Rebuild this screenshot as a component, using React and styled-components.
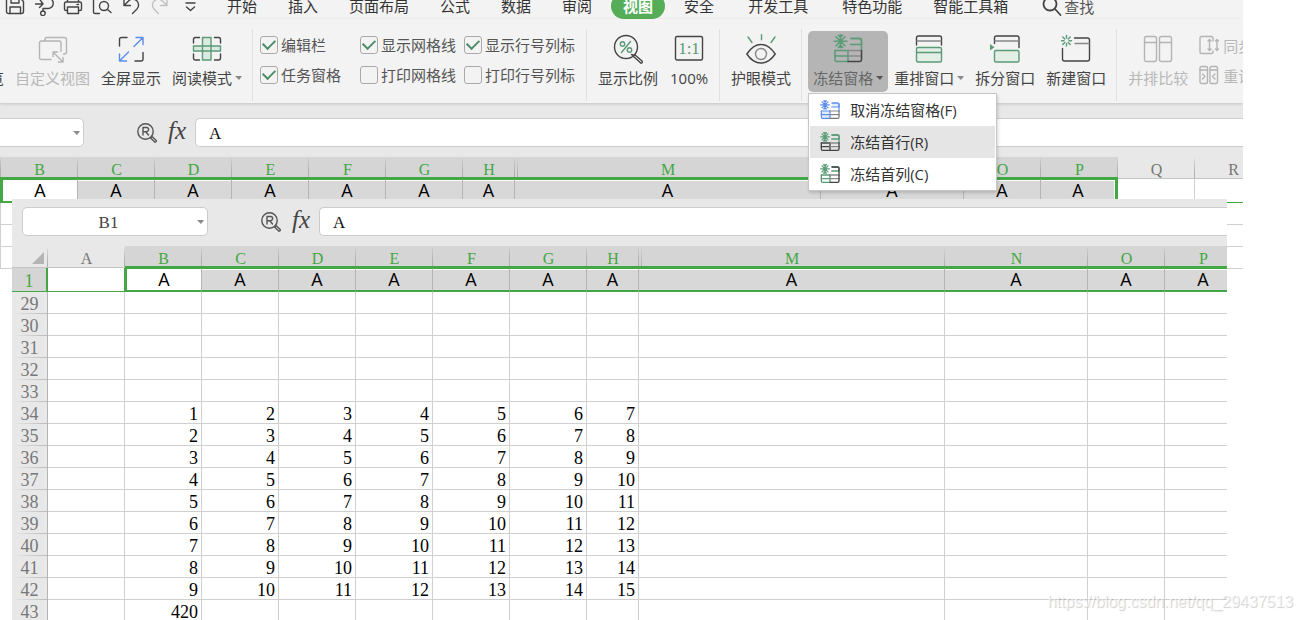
import React from "react";
import styled, { createGlobalStyle, css } from "styled-components";

const green = "#43a743";
const iconGreen = "#5b9b77";
const iconBlue = "#5b8def";
const iconGray = "#b4b4b4";
const iconDark = "#444";

const tabGroups = [
  ["开始", "插入", "页面布局", "公式", "数据", "审阅", "视图", "安全"],
  ["开发工具"],
  ["特色功能", "智能工具箱"],
];

const checks = [
  { id: "formula-bar", label: "编辑栏", on: true },
  { id: "show-grid", label: "显示网格线", on: true },
  { id: "show-heads", label: "显示行号列标", on: true },
  { id: "task-pane", label: "任务窗格", on: true },
  { id: "print-grid", label: "打印网格线", on: false },
  { id: "print-heads", label: "打印行号列标", on: false },
];

const columns = [
  { name: "B", width: 77 },
  { name: "C", width: 77 },
  { name: "D", width: 77 },
  { name: "E", width: 77 },
  { name: "F", width: 77 },
  { name: "G", width: 77 },
  { name: "H", width: 52 },
  { name: "M", width: 306, afterHidden: true },
  { name: "N", width: 143 },
  { name: "O", width: 77 },
  { name: "P", width: 77 },
];

const extraColumns = [
  { name: "Q", width: 77 },
  { name: "R", width: 77 },
];

const rows = [29, 30, 31, 32, 33, 34, 35, 36, 37, 38, 39, 40, 41, 42, 43];

const cellValue = (row, index) => {
  if (row === 43) return index === 0 ? 420 : "";
  if (row < 34 || index > 6) return "";
  return row - 33 + index;
};

/* icons */

const Icon = ({ size = 30, box = 30, color = iconDark, children }) => (
  <svg
    width={size}
    height={size}
    viewBox={`0 0 ${box} ${box}`}
    fill="none"
    stroke={color}
    strokeWidth="1.4"
    strokeLinecap="round"
    strokeLinejoin="round"
    aria-hidden="true"
  >
    {children}
  </svg>
);

const SaveIcon = () => (
  <Icon size={20} box={20}>
    <path d="M1.5 3.5a2 2 0 0 1 2-2h11l4 4v10a2 2 0 0 1-2 2h-13a2 2 0 0 1-2-2z" />
    <path d="M5 17.5v-6.500h10.500v6.500M6 1.500v5.500h8v-5.500" />
  </Icon>
);

const ExportIcon = () => (
  <Icon size={20} box={20}>
    <path d="M1.500 8h6M5.500 3l3.500 5-3.500 3.500M8.500 2h5.500a4.800 4.800 0 0 1 0 10.500h-5v2.500a2.300 2.300 0 1 0 2.200 2.200q0-2.200-2.200-2.200h-.5" />
  </Icon>
);

const PrintIcon = () => (
  <Icon size={20} box={20}>
    <path d="M4.500 6v-4.500h11v4.500M4.500 14.500h-1.500q-1.500 0-1.500-1.500v-5.500q0-1.500 1.500-1.500h14q1.500 0 1.500 1.500v5.500q0 1.500-1.500 1.500h-1.500M4.500 11h11v6.500h-11zM14 8.500h1.500" />
  </Icon>
);

const PreviewIcon = () => (
  <Icon size={20} box={20}>
    <path d="M7.500 17.500h-4.500q-1.500 0-1.500-1.500v-14.500h15v2" />
    <circle cx="12" cy="10" r="4.500" />
    <path d="M15.500 13.500l3.500 3" />
  </Icon>
);

const UndoIcon = ({ color, flip }) => (
  <Icon size={20} box={20} color={color}>
    <g transform={flip ? "translate(20 0) scale(-1 1)" : undefined}>
      <path d="M3 3v6.500h6.500M3.500 9l4-4a5.800 5.800 0 0 1 8.500 8l-4.500 4.500" />
    </g>
  </Icon>
);

const MoreIcon = () => (
  <Icon size={20} box={20}>
    <path d="M7 7h9M7.500 11l4 3.500 4-3.500" />
  </Icon>
);

const SearchIcon = () => (
  <Icon size={20} box={20}>
    <g strokeWidth="1.800">
      <circle cx="8" cy="8" r="6.500" />
      <path d="M13 13l5.500 6" />
    </g>
  </Icon>
);

const CustomViewIcon = () => (
  <Icon color={iconGray}>
    <path d="M7 7v-1.500q0-2 2-2h17.500q2 0 2 2v12.500q0 2-2 2h-1" />
    <path d="M13 25.500h-9.500q-2 0-2-2v-14.500q0-2 2-2h17.500q2 0 2 2v8.500" />
    <path d="M15 18l10 10M15 22.500v-4.500h4.500M20.500 28h4.500v-4.500" />
  </Icon>
);

const FullScreenIcon = () => (
  <Icon>
    <path d="M3.500 12v-6.500q0-2 2-2h5.500M19 27h6q2 0 2-2v-6.500" />
    <path stroke={iconBlue} d="M18 12.500l9-9M20 3.500h7v7M12.500 18l-9 9M3.500 20v7h7" />
  </Icon>
);

const ReadingIcon = () => (
  <Icon>
    <path d="M1.500 9v-3.500q0-2 2-2h4M22.500 3.500h4q2 0 2 2v3.500M28.500 20v4q0 2-2 2h-4M7.500 26h-4q-2 0-2-2v-4" />
    <g stroke={iconGreen} fill="#dcebe1">
      <path d="M10.500 3.500h8.500v22.500h-8.500z" />
      <path d="M1.500 12h27v5h-27z" />
      <path fill="none" d="M10.500 12v5M19 12v5" />
    </g>
  </Icon>
);

const RatioIcon = () => (
  <Icon>
    <circle cx="13" cy="13" r="11.500" />
    <path d="M20 22l1.500-1.500 7.500 6.500q1 2-1 2.200zM18.500 20.500l2 1" />
    <g stroke={iconGreen}>
      <circle cx="9.500" cy="10" r="2.200" />
      <circle cx="16.500" cy="16" r="2.200" />
      <path d="M17.500 7.500l-9 11" />
    </g>
  </Icon>
);

const ActualSizeIcon = () => (
  <Icon>
    <rect x="1.500" y="2.500" width="27" height="23.500" rx="1.500" />
    <text
      x="15"
      y="20"
      textAnchor="middle"
      fontFamily="Liberation Serif, serif"
      fontSize="17"
      fill={iconGreen}
      stroke="none"
    >
      1:1
    </text>
  </Icon>
);

const EyeIcon = () => (
  <Icon>
    <path d="M.8 20c4-6 9-9.500 14.200-9.500s10.200 3.500 14.200 9.500c-4 6-9 9-14.200 9s-10.200-3-14.200-9z" />
    <circle cx="15" cy="20" r="5.500" stroke="#888" />
    <path stroke={iconGreen} d="M2 3l4 5.500M15.500.8v5M29 3l-4 5.500" />
  </Icon>
);

const FreezeIcon = ({ size, accent = iconGreen, top, left, corner = iconDark, fill = "none", weight = 1.5 }) => (
  <Icon size={size}>
    <g strokeWidth={weight}>
      <path
        stroke={accent}
        d="M7.500.8v13M1 7.300h13M3 2.800l9 9M12 2.800l-9 9M5.500 1.200l2 2 2-2M5.500 13.400l2-2 2 2"
      />
      <path stroke={accent} fill={fill} d="M18 4.500h8.500q2 0 2 2v4h-11" />
      <path stroke={left || accent} fill={fill} d="M2 16.500v9q0 2 2 2h11v-11" />
      <path stroke={left || accent} d="M2 22h13M2 16.500h13" />
      <path stroke={top || accent} d="M18 4.500h8.500q2 0 2 2v10" />
      <path stroke="#8a8a8a" d="M15 22h13.500M15 16.500h13.500" />
      <path stroke={corner} d="M15 27.500h11.500q2 0 2-2v-9" />
    </g>
  </Icon>
);

const ArrangeIcon = () => (
  <Icon>
    <path d="M2.500 11v-7q0-2 2-2h21q2 0 2 2v7" />
    <path stroke="#888" d="M3 7h24" />
    <path stroke={iconGreen} fill="#e3eee7" d="M4 13.500h22q1.500 0 1.500 1.500v11.500q0 1.500-1.500 1.500h-22q-1.500 0-1.500-1.500v-11.500q0-1.500 1.500-1.500zM2.500 18.500h25" />
  </Icon>
);

const SplitIcon = () => (
  <Icon>
    <path d="M4.500 9.500v-5.500q0-2 2-2h20.500q2 0 2 2v9.500" />
    <path stroke="#888" d="M5 7h23.500" />
    <path fill={iconGreen} stroke="none" d="M0 10l4.500 3.200-4.500 3.200z" />
    <rect x="4.500" y="16.500" width="24.500" height="11.500" rx="1.500" stroke={iconGreen} fill="#e3eee7" />
  </Icon>
);

const NewWindowIcon = () => (
  <Icon>
    <path d="M1.500 14.500v10.500q0 2 2 2h23q2 0 2-2v-19q0-2-2-2h-13" />
    <path stroke="#888" d="M14 9.500h14" />
    <path stroke={iconGreen} d="M5.500 1.500v2.500M5.500 9.500v2.500M.5 6.800h2.500M8 6.800h2.500M1.800 3l2 2M7.200 8.500l2 2M9.200 3l-2 2M3.800 8.500l-2 2" />
  </Icon>
);

const CompareIcon = () => (
  <Icon color={iconGray}>
    <rect x="1.500" y="2.500" width="12" height="25" rx="2" />
    <rect x="16.500" y="2.500" width="12" height="25" rx="2" />
    <path d="M2 8.500h11M17 8.500h11" />
  </Icon>
);

const SyncIcon = () => (
  <Icon size={20} box={20} color={iconGray}>
    <path d="M14 6v-3q0-1.500-1.500-1.500h-10q-1.500 0-1.500 1.500v14q0 1.500 1.500 1.500h10q1.500 0 1.500-1.500v-1" />
    <path d="M10.500 4.500v11M9 6l1.500-1.500L12 6M9 14l1.500 1.500L12 14M18 4.500v11M16.500 6L18 4.500 19.500 6M16.500 14l1.500 1.500 1.500-1.500" />
  </Icon>
);

const ResetIcon = () => (
  <Icon size={20} box={20} color={iconGray}>
    <rect x="1" y="1.500" width="7.500" height="17" rx="1.500" />
    <rect x="11" y="1.500" width="7.500" height="17" rx="1.500" />
    <path d="M1 5h7.500M11 5h7.500M3.500 9l2.500 2.500L3.500 14M16 9l-2.500 2.500L16 14" />
  </Icon>
);

const LookupIcon = () => (
  <Icon size={20} box={20} color="#555">
    <circle cx="8.500" cy="8.500" r="7.700" />
    <path d="M6 12v-7.500h3.500a2 2 0 0 1 0 4.200h-3.500M9 9l2.500 3" />
    <path d="M13.500 15l1.500-1.500 4.200 4q.5 1.500-1.200 1.700z" />
  </Icon>
);

/* spreadsheet pieces */

const FormulaBar = ({ id, name, shifted, tall }) => (
  <FormulaRow $shifted={shifted} $tall={tall}>
    <NameBox>
      <input aria-label={`${id} name box`} defaultValue={name} />
      <button type="button" aria-label="Names">
        <Caret />
      </button>
    </NameBox>
    <FormulaTools>
      <button type="button" aria-label="Lookup">
        <LookupIcon />
      </button>
      <FxButton type="button">fx</FxButton>
    </FormulaTools>
    <FormulaInput aria-label={`${id} formula`} defaultValue="A" />
  </FormulaRow>
);

const BackSheet = () => (
  <Sheet>
    <colgroup>
      <col width={1} />
      {[...columns, ...extraColumns].map((column) => (
        <col key={column.name} width={column.width} />
      ))}
    </colgroup>
    <thead>
      <tr>
        <ColumnHead $on />
        {columns.map((column) => (
          <ColumnHead key={column.name} $on $double={column.afterHidden}>
            {column.name}
          </ColumnHead>
        ))}
        {extraColumns.map((column) => (
          <ColumnHead key={column.name}>{column.name}</ColumnHead>
        ))}
      </tr>
    </thead>
    <tbody>
      <tr>
        <BeforeCell $on />
        {columns.map((column, index) => (
          <PickedCell key={column.name} $first={index === 0} $last={index === columns.length - 1}>
            A
          </PickedCell>
        ))}
        {extraColumns.map((column) => (
          <BesideCell key={column.name} />
        ))}
      </tr>
      {[2, 3, 4].map((row) => (
        <tr key={row}>
          <BeforeCell />
          {[...columns, ...extraColumns].map((column) => (
            <Cell key={column.name} />
          ))}
        </tr>
      ))}
    </tbody>
  </Sheet>
);

const FrontSheet = () => (
  <Sheet>
    <colgroup>
      <col width={36} />
      <col width={77} />
      {columns.map((column) => (
        <col key={column.name} width={column.width} />
      ))}
    </colgroup>
    <thead>
      <tr>
        <ColumnHead>
          <Corner />
        </ColumnHead>
        <ColumnHead>A</ColumnHead>
        {columns.map((column) => (
          <ColumnHead key={column.name} $on $double={column.afterHidden}>
            {column.name}
          </ColumnHead>
        ))}
      </tr>
    </thead>
    <tbody>
      <tr>
        <RowHead scope="row" $on>
          1
        </RowHead>
        <BesideCell $before />
        {columns.map((column, index) => (
          <PickedCell key={column.name} $first={index === 0}>
            A
          </PickedCell>
        ))}
      </tr>
      {rows.map((row) => (
        <tr key={row}>
          <RowHead scope="row">{row}</RowHead>
          <Cell />
          {columns.map((column, index) => (
            <Cell key={column.name}>{cellValue(row, index)}</Cell>
          ))}
        </tr>
      ))}
    </tbody>
  </Sheet>
);

const App = () => {
  return (
    <Wrapper>
      <GlobalStyle />
      <BackWindow>
        <MenuBar>
          <QuickTools>
            <button type="button" aria-label="Save"><SaveIcon /></button>
            <button type="button" aria-label="Export"><ExportIcon /></button>
            <button type="button" aria-label="Print"><PrintIcon /></button>
            <button type="button" aria-label="Preview"><PreviewIcon /></button>
            <button type="button" aria-label="Undo"><UndoIcon /></button>
            <button type="button" aria-label="Redo" disabled><UndoIcon flip color="#c0c0c0" /></button>
            <button type="button" aria-label="More"><MoreIcon /></button>
          </QuickTools>
          <Tabs>
            {tabGroups.map((group) => (
              <TabGroup key={group[0]}>
                {group.map((tab) => (
                  <Tab key={tab} type="button" $active={tab === "视图"}>
                    {tab}
                  </Tab>
                ))}
              </TabGroup>
            ))}
          </Tabs>
          <SearchButton type="button">
            <SearchIcon />
            查找
          </SearchButton>
        </MenuBar>

        <Ribbon>
          <Group $cut>
            <Tool type="button" $narrow><Blank /><span>览</span></Tool>
            <Tool type="button" disabled><CustomViewIcon /><span>自定义视图</span></Tool>
            <Tool type="button"><FullScreenIcon /><span>全屏显示</span></Tool>
            <Tool type="button"><ReadingIcon /><span>阅读模式<Caret /></span></Tool>
          </Group>
          <Divider />
          <CheckGrid>
            {checks.map(({ id, label, on }) => (
              <Check key={id} htmlFor={id}>
                <input id={id} type="checkbox" defaultChecked={on} />
                {label}
              </Check>
            ))}
          </CheckGrid>
          <Divider />
          <Group>
            <Tool type="button"><RatioIcon /><span>显示比例</span></Tool>
            <Tool type="button"><ActualSizeIcon /><span>100%</span></Tool>
          </Group>
          <Divider />
          <Group>
            <Tool type="button"><EyeIcon /><span>护眼模式</span></Tool>
          </Group>
          <Divider />
          <Group>
            <MenuAnchor>
              <Tool type="button" $open aria-expanded="true">
                <FreezeIcon />
                <span>冻结窗格<Caret $dark /></span>
              </Tool>
              <Menu role="menu">
                <MenuItem type="button" role="menuitem">
                  <FreezeIcon size={20} accent={iconBlue} fill="#e3ecfc" weight={1.8} corner="#777" />
                  取消冻结窗格(F)
                </MenuItem>
                <MenuItem type="button" role="menuitem" $hover>
                  <FreezeIcon size={20} left={iconDark} weight={2} />
                  冻结首行(R)
                </MenuItem>
                <MenuItem type="button" role="menuitem">
                  <FreezeIcon size={20} top={iconDark} weight={2} />
                  冻结首列(C)
                </MenuItem>
              </Menu>
            </MenuAnchor>
            <Tool type="button"><ArrangeIcon /><span>重排窗口<Caret /></span></Tool>
            <Tool type="button"><SplitIcon /><span>拆分窗口</span></Tool>
            <Tool type="button"><NewWindowIcon /><span>新建窗口</span></Tool>
          </Group>
          <Divider />
          <Group>
            <Tool type="button" disabled><CompareIcon /><span>并排比较</span></Tool>
            <SideTools>
              <button type="button" disabled><SyncIcon />同步</button>
              <button type="button" disabled><ResetIcon />重设</button>
            </SideTools>
          </Group>
        </Ribbon>

        <FormulaBar id="back" name="" shifted tall />
        <BackSheet />
      </BackWindow>

      <FrontWindow>
        <FormulaBar id="front" name="B1" />
        <FrontSheet />
      </FrontWindow>

      <Watermark>https://blog.csdn.net/qq_29437513</Watermark>
    </Wrapper>
  );
};

const GlobalStyle = createGlobalStyle`
  * {
    box-sizing: border-box;
  }
  body {
    margin: 0;
    overflow: hidden;
    background: #fff;
    font-family: "Open Sans", "Noto Sans CJK SC", sans-serif;
    font-size: 15px;
  }
  button {
    margin: 0;
    padding: 0;
    border: none;
    background: none;
    font: inherit;
    color: inherit;
    white-space: nowrap;
  }
  svg {
    display: block;
    flex-shrink: 0;
  }
`;

const Wrapper = styled.main`
  position: relative;
  height: 100vh;
  overflow: hidden;
`;

const BackWindow = styled.section`
  margin-right: 59px;
  overflow: hidden;
  background: #e8e8e8;
`;

const FrontWindow = styled.section`
  position: absolute;
  top: 199px;
  left: 12px;
  right: 75px;
  overflow: hidden;
  background: #e8e8e8;
`;

const MenuBar = styled.nav`
  display: flex;
  align-items: center;
  height: 26px;
  margin-top: -7px;
  padding-left: 5px;
  background: #f3f3f3;
  color: #333;
`;

const QuickTools = styled.div`
  display: flex;
  gap: 9px;
  margin-right: 16px;
`;

const Tabs = styled.div`
  display: flex;
  gap: 10px;
`;

const TabGroup = styled.div`
  display: flex;
  gap: 7px;
`;

const Tab = styled.button`
  height: 26px;
  padding: 0 12px;
  border-radius: 13px;
  line-height: 26px;
  ${({ $active }) =>
    $active &&
    css`
      background: #55ae57;
      color: #fff;
      font-weight: bold;
    `}
`;

const SearchButton = styled.button`
  display: flex;
  align-items: center;
  gap: 2px;
  margin-left: 22px;
  color: #555;
`;

const Ribbon = styled.div`
  position: relative;
  z-index: 1;
  display: flex;
  align-items: flex-start;
  height: 84px;
  padding-top: 10px;
  background: #f3f3f3;
  box-shadow: 0 1px 3px rgba(0, 0, 0, 0.16);
  color: #444;
`;

const Group = styled.div`
  display: flex;
  flex-shrink: 0;
  gap: 1px;
  margin-top: 2px;
  margin-left: ${({ $cut }) => ($cut ? "-16px" : "0")};
`;

const Divider = styled.div`
  flex: 0 0 1px;
  height: 72px;
  margin: 0 6px 0 5px;
  background: #e0e0e0;
`;

const Tool = styled.button`
  display: flex;
  flex-direction: column;
  align-items: center;
  min-width: ${({ $narrow }) => ($narrow ? "0" : "50px")};
  height: 61px;
  padding: 3px 5px 0;
  border-radius: 5px;
  background: ${({ $open }) => ($open ? "#b5b5b5" : "none")};
  color: ${({ $open }) => ($open ? "#666" : "inherit")};
  span {
    display: flex;
    align-items: center;
    margin-top: 3px;
    line-height: 22px;
  }
  &:disabled {
    color: #b8b8b8;
  }
`;

const Blank = styled.i`
  height: 30px;
`;

const Caret = styled.i`
  display: block;
  margin-left: 3px;
  border: solid transparent;
  border-width: 4px 3px 0 4px;
  border-top-color: ${({ $dark }) => ($dark ? "#555" : "#8a8a8a")};
`;

const CheckGrid = styled.div`
  display: grid;
  grid-template-columns: 92px auto auto;
  gap: 12px 8px;
  margin-top: 7px;
  padding: 0 6px 0 1px;
`;

const Check = styled.label`
  display: flex;
  align-items: center;
  gap: 3px;
  height: 18px;
  line-height: 18px;
  color: #555;
  white-space: nowrap;
  input {
    display: grid;
    place-items: center;
    width: 18px;
    height: 18px;
    margin: 0;
    appearance: none;
    border: 1px solid #aaa;
    border-radius: 3px;
  }
  input:checked::before {
    content: "";
    width: 10px;
    height: 6px;
    margin-bottom: 4px;
    border: solid #4b8b66;
    border-width: 0 0 2px 2px;
    transform: rotate(-45deg);
  }
`;

const MenuAnchor = styled.div`
  position: relative;
`;

const Menu = styled.div`
  position: absolute;
  top: 62px;
  left: 0;
  width: 189px;
  padding: 0 1px;
  border: 1px solid #c6c6c6;
  background: #fff;
  box-shadow: 1px 2px 3px rgba(0, 0, 0, 0.16);
  color: #333;
`;

const MenuItem = styled.button`
  display: flex;
  align-items: center;
  gap: 10px;
  width: 100%;
  height: 32px;
  padding: 0 0 1px 10px;
  background: ${({ $hover }) => ($hover ? "#e5e5e5" : "none")};
`;

const SideTools = styled.div`
  display: grid;
  align-content: start;
  gap: 10px;
  margin: 4px 0 0 5px;
  button {
    display: flex;
    align-items: center;
    gap: 4px;
    height: 20px;
    color: #b8b8b8;
  }
`;

const FormulaRow = styled.div`
  display: flex;
  align-items: center;
  padding: ${({ $tall }) => ($tall ? "15px" : "8px")} 0 10px 10px;
  margin-left: ${({ $shifted }) => ($shifted ? "-112px" : "0")};
`;

const NameBox = styled.div`
  display: flex;
  align-items: center;
  flex: 0 0 186px;
  min-width: 0;
  height: 29px;
  padding-right: 3px;
  border: 1px solid #ccc;
  border-radius: 5px;
  background: #fff;
  input {
    flex: 1;
    width: 0;
    min-width: 0;
    padding: 2px 0 0;
    border: none;
    background: none;
    font: 17px "Liberation Serif", serif;
    color: #444;
    text-align: center;
  }
`;

const FormulaTools = styled.div`
  display: flex;
  align-items: center;
  gap: 10px;
  height: 28px;
  margin: 0 8px 0 53px;
`;

const FxButton = styled.button`
  width: 20px;
  padding-bottom: 4px;
  font: italic 25px/24px "Liberation Serif", serif;
  color: #444;
`;

const FormulaInput = styled.input`
  flex: 1;
  min-width: 0;
  height: 29px;
  padding: 3px 0 0 13px;
  border: 1px solid #ccc;
  border-right: none;
  border-radius: 5px 0 0 5px;
  background: #fff;
  font: 17px "Liberation Serif", serif;
  color: #111;
`;

const Sheet = styled.table`
  width: 0;
  table-layout: fixed;
  border-collapse: separate;
  border-spacing: 0;
  th,
  td {
    padding: 0;
    white-space: nowrap;
  }
`;

const ColumnHead = styled.th`
  height: 22px;
  border-bottom: ${({ $on }) => ($on ? `2px solid ${green}` : "1px solid #c4c4c4")};
  background-color: ${({ $on }) => ($on ? "#d5d5d5" : "#e8e8e8")};
  background-image: linear-gradient(transparent, #b0b0b0), linear-gradient(transparent, #b0b0b0);
  background-position: right top, ${({ $double }) => ($double ? "2px top" : "right top")};
  background-repeat: no-repeat;
  background-size: 1px 100%;
  color: ${({ $on }) => ($on ? green : "#777")};
  font: 16px/15px "Liberation Serif", serif;
  vertical-align: bottom;
  &&& {
    padding-bottom: ${({ $on }) => ($on ? "0" : "1px")};
  }
`;

const Corner = styled.div`
  width: 0;
  margin: 0 4px 2px auto;
  border: solid transparent;
  border-width: 0 0 12px 12px;
  border-bottom-color: #b4b4b4;
`;

const RowHead = styled.th`
  height: ${({ $on }) => ($on ? "24px" : "22px")};
  border-right: ${({ $on }) => ($on ? `2px solid ${green}` : "1px solid #b4b4b4")};
  border-bottom: ${({ $on }) => ($on ? `1px solid ${green}` : "none")};
  background: ${({ $on }) =>
    $on ? "#d5d5d5" : "linear-gradient(to right, transparent, #bbb) left bottom / 100% 1px no-repeat #e8e8e8"};
  color: ${({ $on }) => ($on ? green : "#777")};
  font: 18px/20px "Liberation Serif", serif;
  &&& {
    padding-top: 2px;
  }
`;

const Cell = styled.td`
  height: 22px;
  border-right: 1px solid #d0d0d0;
  border-bottom: 1px solid #d0d0d0;
  background: #fff;
  color: #000;
  font: 18px/18px "Liberation Serif", serif;
  text-align: right;
  vertical-align: bottom;
  &&& {
    padding-right: 3px;
  }
`;

const PickedCell = styled.td`
  height: 24px;
  border-top: 1px solid ${green};
  border-right: ${({ $last }) => ($last ? `3px solid ${green}` : "1px solid #b4b4b4")};
  border-bottom: 2px solid ${green};
  border-left: ${({ $first }) => ($first ? `2px solid ${green}` : "none")};
  background: ${({ $first }) => ($first ? "#fff" : "#d8d8d8")};
  box-shadow: inset ${({ $last }) => ($last ? "-1px" : "0")} 1px #fff;
  color: #000;
  font: 18px/20px "Open Sans", sans-serif;
  text-align: center;
  vertical-align: top;
`;

const BesideCell = styled.td`
  height: 24px;
  border-right: 1px solid ${({ $before }) => ($before ? green : "#d0d0d0")};
  border-bottom: 1px solid ${green};
  background: #fff;
`;

const BeforeCell = styled.td`
  background: ${({ $on }) => ($on ? green : "#d0d0d0")};
`;

const Watermark = styled.div`
  position: absolute;
  right: 9px;
  bottom: 8px;
  color: rgba(255, 255, 255, 0.7);
  font: 16px/20px "Liberation Sans", sans-serif;
  text-shadow: 1px 1px 1px rgba(0, 0, 0, 0.2);
`;

export default App;
